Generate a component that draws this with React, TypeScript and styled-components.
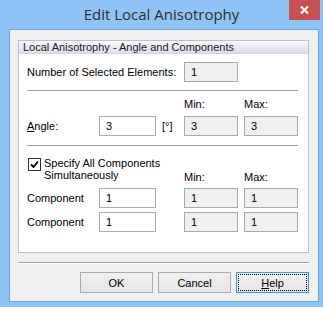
import React from 'react';
import styled, { createGlobalStyle } from 'styled-components';

const GlobalStyle = createGlobalStyle`
  body {
    margin: 0;
    background: #ffffff;
    font-family: "Liberation Sans", Arial, sans-serif;
  }
`

const Frame = styled.div`
  width: 323px;
  height: 307px;
  background: #8ec4f5;
  display: flex;
  flex-direction: column;
`

const TitleBar = styled.div`
  height: 29px;
  display: grid;
  grid-template-columns: 1fr auto 1fr;
  align-items: center;
`

const Title = styled.div`
  grid-column: 2;
  font-family: "Open Sans", "Noto Sans", sans-serif;
  font-size: 15px;
  color: #2e2e2e;
  margin-top: -1px;
`

const CloseButton = styled.div`
  grid-column: 3;
  justify-self: end;
  align-self: start;
  width: 31px;
  height: 20px;
  margin-right: 3px;
  background: #c75050;
  display: flex;
  align-items: center;
  justify-content: center;
`

const Client = styled.div`
  margin-left: 9px;
  width: 310px;
  height: 273px;
  box-sizing: border-box;
  border: 1px solid #6ea4d8;
  background: #f0f0f0;
  padding: 10px 9px 0 8px;
  display: flex;
  flex-direction: column;
`

const Group = styled.div`
  border: 1px solid #b9c0d8;
  background: #ffffff;
  height: 213px;
  box-sizing: border-box;
  display: flex;
  flex-direction: column;
`

const GroupHeader = styled.div`
  height: 12px;
  line-height: 12px;
  font-size: 11px;
  padding-left: 4px;
  color: #1a1a1a;
  background: linear-gradient(#f7f8fb, #dadfeb);
  border-bottom: 1px solid #d2d7e5;
`

const GroupBody = styled.div`
  padding: 8px 10px 0 8px;
  font-size: 11px;
  color: #000000;
`

const Grid = styled.div<{ $rowGap: number; $top?: number }>`
  display: grid;
  grid-template-columns: 66px 57px 16px 54px 54px;
  column-gap: 6px;
  row-gap: ${p => p.$rowGap}px;
  align-items: center;
  margin-top: ${p => p.$top ?? 0}px;
`

const Label = styled.span<{ $span?: number }>`
  grid-column: span ${p => p.$span ?? 1};
  white-space: nowrap;
`

const HeadLabel = styled.span<{ $col: number }>`
  grid-column: ${p => p.$col};
  align-self: end;
  line-height: 13px;
`

const Field = styled.div<{ $readOnly?: boolean }>`
  height: 20px;
  box-sizing: border-box;
  border: 1px solid ${p => (p.$readOnly ? '#aaaaaa' : '#abadb3')};
  background: ${p => (p.$readOnly ? '#f0f0f0' : '#ffffff')};
  padding-left: 6px;
  line-height: 18px;
`

const Divider = styled.div<{ $top: number }>`
  height: 1px;
  background: #a0a0a0;
  margin-top: ${p => p.$top}px;
`

const CheckRow = styled.label`
  grid-column: span 3;
  display: flex;
  align-items: flex-start;
  gap: 3px;
  line-height: 12px;
  padding-bottom: 3px;
  margin-left: 1px;
`

const CheckBox = styled.span`
  width: 11px;
  height: 11px;
  flex: none;
  border: 1px solid #333333;
  background: #ffffff;
  margin-top: 1px;
  display: flex;
  align-items: center;
  justify-content: center;
`

const Separator = styled.div`
  margin-top: 9px;
  height: 1px;
  background: #a0a0a0;
  border-bottom: 1px solid #ffffff;
`

const ButtonRow = styled.div`
  margin-top: 8px;
  display: flex;
  justify-content: flex-end;
  gap: 5px;
`

const Button = styled.div<{ $focused?: boolean }>`
  width: 73px;
  height: 21px;
  box-sizing: border-box;
  border: 1px solid ${p => (p.$focused ? '#3399ff' : '#acacac')};
  background: linear-gradient(#f0f0f0, #e5e5e5);
  font-size: 11px;
  color: #000000;
  display: flex;
  align-items: center;
  justify-content: center;
  outline: ${p => (p.$focused ? '1px dotted #000000' : 'none')};
  outline-offset: -3px;
`

function Check() {
  return (
    <svg width="9" height="9" viewBox="0 0 9 9">
      <path d="M1 4.5 L3.5 7 L8 1.5" stroke="#000" strokeWidth="1.8" fill="none" />
    </svg>
  );
}

function App() {
  return (
    <>
      <GlobalStyle />
      <Frame>
        <TitleBar>
          <Title>Edit Local Anisotrophy</Title>
          <CloseButton>
            <svg width="9" height="8" viewBox="0 0 9 8">
              <path d="M1 0.5 L8 7.5 M8 0.5 L1 7.5" stroke="#fff" strokeWidth="2" />
            </svg>
          </CloseButton>
        </TitleBar>
        <Client>
          <Group>
            <GroupHeader>Local Anisotrophy - Angle and Components</GroupHeader>
            <GroupBody>
              <Grid $rowGap={0}>
                <Label $span={3}>Number of Selected Elements:</Label>
                <Field $readOnly>1</Field>
              </Grid>
              <Divider $top={8} />
              <Grid $rowGap={5} $top={7}>
                <HeadLabel $col={4}>Min:</HeadLabel>
                <HeadLabel $col={5}>Max:</HeadLabel>
                <Label><u>A</u>ngle:</Label>
                <Field>3</Field>
                <Label>[°]</Label>
                <Field $readOnly>3</Field>
                <Field $readOnly>3</Field>
              </Grid>
              <Divider $top={9} />
              <Grid $rowGap={4} $top={11}>
                <CheckRow>
                  <CheckBox><Check /></CheckBox>
                  <span>Specify All Components<br />Simultaneously</span>
                </CheckRow>
                <HeadLabel $col={4}>Min:</HeadLabel>
                <HeadLabel $col={5}>Max:</HeadLabel>
                <Label>Component</Label>
                <Field>1</Field>
                <span />
                <Field $readOnly>1</Field>
                <Field $readOnly>1</Field>
                <Label>Component</Label>
                <Field>1</Field>
                <span />
                <Field $readOnly>1</Field>
                <Field $readOnly>1</Field>
              </Grid>
            </GroupBody>
          </Group>
          <Separator />
          <ButtonRow>
            <Button>OK</Button>
            <Button>Cancel</Button>
            <Button $focused><span><u>H</u>elp</span></Button>
          </ButtonRow>
        </Client>
      </Frame>
    </>
  );
}

export default App;
